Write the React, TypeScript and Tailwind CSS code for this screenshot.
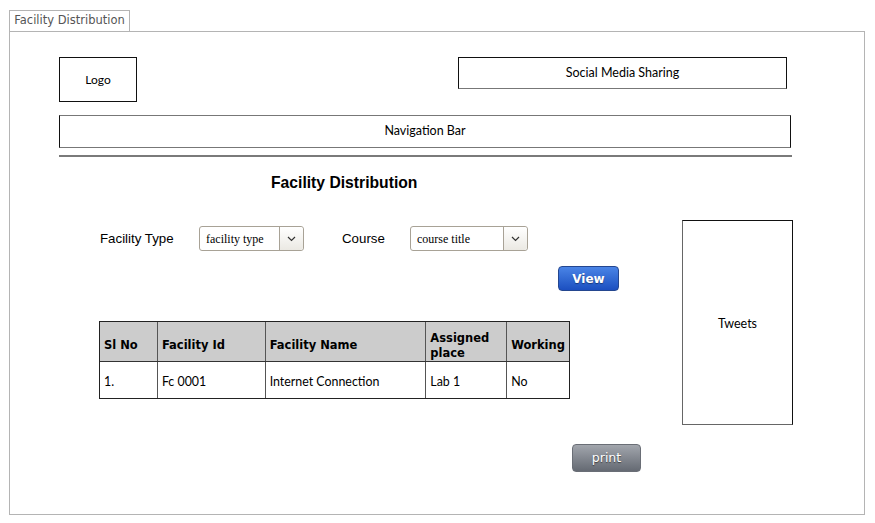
import React from "react";

function Select({ text, widthClass }: { text: string; widthClass: string }) {
  return (
    <div className={`flex h-[25px] rounded-[3px] border border-[#a8a296] bg-white ${widthClass}`}>
      <div className="flex flex-1 items-center pl-[6px] font-['Liberation_Serif',serif] text-[12px] text-black">
        {text}
      </div>
      <div className="flex w-[24px] items-center justify-center rounded-r-[3px] border-l border-[#a8a296] bg-gradient-to-b from-white to-[#ebe9e3]">
        <svg width="9" height="6" viewBox="0 0 9 6">
          <path d="M1 1 L4.5 4.5 L8 1" fill="none" stroke="#333" strokeWidth="1.2" />
        </svg>
      </div>
    </div>
  );
}

const colClasses = ["w-[58px]", "w-[108px]", "w-[161px]", "w-[81px]", "w-[62px]"];
const heads = ["Sl No", "Facility Id", "Facility Name", "Assigned place", "Working"];
const row = ["1.", "Fc 0001", "Internet Connection", "Lab 1", "No"];

export default function App() {
  return (
    <div className="min-h-[523px] w-[875px] bg-white pl-[9px] pt-[10px] font-['Liberation_Sans',Arial,sans-serif]">
      <div className="flex h-[21px] w-[121px] items-center justify-center border border-b-0 border-[#b4b4b4] font-['DejaVu_Sans',sans-serif] text-[11.5px] text-[#555]">
        Facility Distribution
      </div>
      <div className="h-[484px] w-[856px] border border-[#b4b4b4] pl-[49px] font-[Lato,sans-serif]">
        <div className="mt-[25px] flex items-start">
          <div className="flex h-[45px] w-[78px] items-center justify-center border border-[#111] text-[12px] text-black">
            Logo
          </div>
          <div className="ml-[321px] flex h-[32px] w-[329px] items-center justify-center border border-[#111] border-b-[#777] text-[12.5px] text-black">
            Social Media Sharing
          </div>
        </div>
        <div className="mt-[13px] flex h-[33px] w-[732px] items-center justify-center border border-[#111] border-t-[#777] border-b-[#777] text-[12.5px] text-black">
          Navigation Bar
        </div>
        <div className="mt-[7px] h-[2px] w-[733px] bg-[#7a7a7a]" />
        <div className="mt-[16px] h-[20px] pl-[212px] font-['Liberation_Sans',Arial,sans-serif] text-[15.7px] font-bold leading-[20px] text-black">
          Facility Distribution
        </div>
        <div className="flex">
          <div className="w-[623px]">
            <div className="mt-[33px] flex h-[25px] items-center font-['Liberation_Sans',Arial,sans-serif] text-[13.3px] text-black">
              <div className="ml-[41px] w-[99px]">Facility Type</div>
              <Select text="facility type" widthClass="w-[105px]" />
              <div className="ml-[38px] w-[68px]">Course</div>
              <Select text="course title" widthClass="w-[118px]" />
            </div>
            <div className="ml-[499px] mt-[15px] flex h-[25px] w-[61px] items-center justify-center rounded-[4px] border border-[#24468f] bg-gradient-to-b from-[#4a84e6] to-[#1c4fc0] font-['DejaVu_Sans',sans-serif] text-[12px] font-bold text-white [text-shadow:0_1px_1px_rgba(0,0,0,0.4)]">
              View
            </div>
            <div className="ml-[40px] mt-[30px] w-[471px] border border-[#222] text-black">
              <div className="flex h-[39px] bg-[#cccccc] font-['DejaVu_Sans',sans-serif] text-[11.5px]">
                {heads.map((h, i) => (
                  <div
                    key={h}
                    className={`flex items-center border-[#555] px-[4px] pt-[7px] font-bold leading-[15px] ${colClasses[i]} ${i < 4 ? "border-r" : ""}`}
                  >
                    {h === "Assigned place" ? (
                      <span className="mt-[1px]">Assigned<br />place</span>
                    ) : (
                      h
                    )}
                  </div>
                ))}
              </div>
              <div className="flex h-[37px] border-t border-[#333] text-[12.4px]">
                {row.map((c, i) => (
                  <div
                    key={c}
                    className={`flex items-center border-[#555] px-[4px] pt-[4px] ${colClasses[i]} ${i < 4 ? "border-r" : ""}`}
                  >
                    {c}
                  </div>
                ))}
              </div>
            </div>
            <div className="ml-[513px] mt-[45px] flex h-[28px] w-[69px] items-center justify-center rounded-[4px] border border-[#6a6e76] bg-gradient-to-b from-[#a2a6ad] to-[#656a73] font-['DejaVu_Sans',sans-serif] text-[12.5px] text-white [text-shadow:0_1px_1px_rgba(0,0,0,0.5)]">
              print
            </div>
          </div>
          <div className="mt-[27px] flex h-[205px] w-[111px] items-center justify-center border border-[#111] border-b-[#666] border-l-[#666] pt-[3px] text-[12.5px] text-black">
            Tweets
          </div>
        </div>
      </div>
    </div>
  );
}
